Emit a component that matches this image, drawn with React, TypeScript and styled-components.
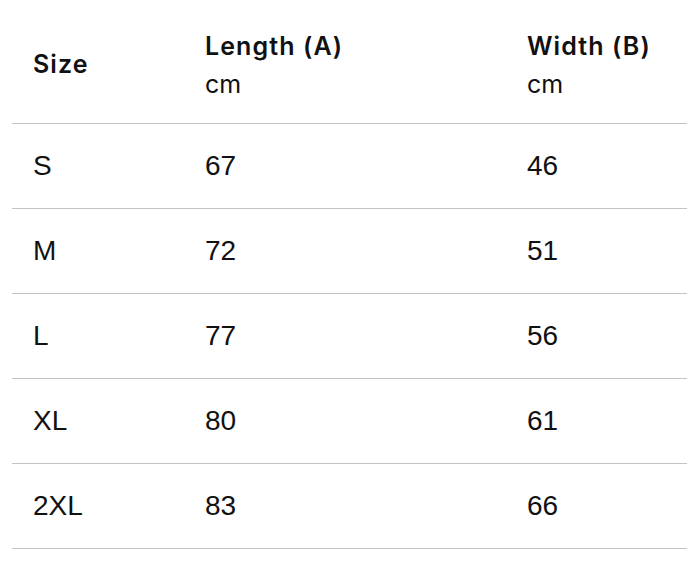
import { createGlobalStyle } from "styled-components"
import styled from "styled-components"

const GlobalStyle = createGlobalStyle`
  html, body {
    margin: 0;
    padding: 0;
    background: #ffffff;
  }
  body {
    font-family: "Liberation Sans", Arial, sans-serif;
    color: #111111;
  }
`

const rows = [
  { size: "S", length: "67", width: "46" },
  { size: "M", length: "72", width: "51" },
  { size: "L", length: "77", width: "56" },
  { size: "XL", length: "80", width: "61" },
  { size: "2XL", length: "83", width: "66" },
]

const App = () => {
  return (
    <>
      <GlobalStyle />
      <Wrapper>
        <Table>
          <colgroup>
            <col style={{ width: 172 }} />
            <col style={{ width: 322 }} />
            <col />
          </colgroup>
          <thead>
            <tr>
              <HeadCell>
                <HeadTitle>Size</HeadTitle>
              </HeadCell>
              <HeadCell>
                <HeadTitle>Length (A)</HeadTitle>
                <Unit>cm</Unit>
              </HeadCell>
              <HeadCell>
                <HeadTitle>Width (B)</HeadTitle>
                <Unit>cm</Unit>
              </HeadCell>
            </tr>
          </thead>
          <tbody>
            {rows.map((r) => (
              <tr key={r.size}>
                <Cell>{r.size}</Cell>
                <Cell>{r.length}</Cell>
                <Cell>{r.width}</Cell>
              </tr>
            ))}
          </tbody>
        </Table>
      </Wrapper>
    </>
  )
}

const Wrapper = styled.div`
  padding: 0 0 0 12px;
`

const Table = styled.table`
  width: 675px;
  border-collapse: collapse;
  table-layout: fixed;
`

const HeadCell = styled.th`
  height: 118px;
  padding: 5px 0 0 21px;
  text-align: left;
  vertical-align: middle;
  border-bottom: 1px solid #c4c4c4;
`

const HeadTitle = styled.div`
  font-family: Inter, "Liberation Sans", sans-serif;
  font-size: 25px;
  font-weight: 600;
  line-height: 34px;
  letter-spacing: 1.1px;
`

const Unit = styled.div`
  font-family: Inter, "Liberation Sans", sans-serif;
  font-size: 25px;
  font-weight: 400;
  line-height: 36px;
  margin: 3px 0 -3px;
`

const Cell = styled.td`
  height: 84px;
  padding: 0 0 0 21px;
  font-size: 28px;
  vertical-align: middle;
  border-bottom: 1px solid #c4c4c4;
`

export default App
